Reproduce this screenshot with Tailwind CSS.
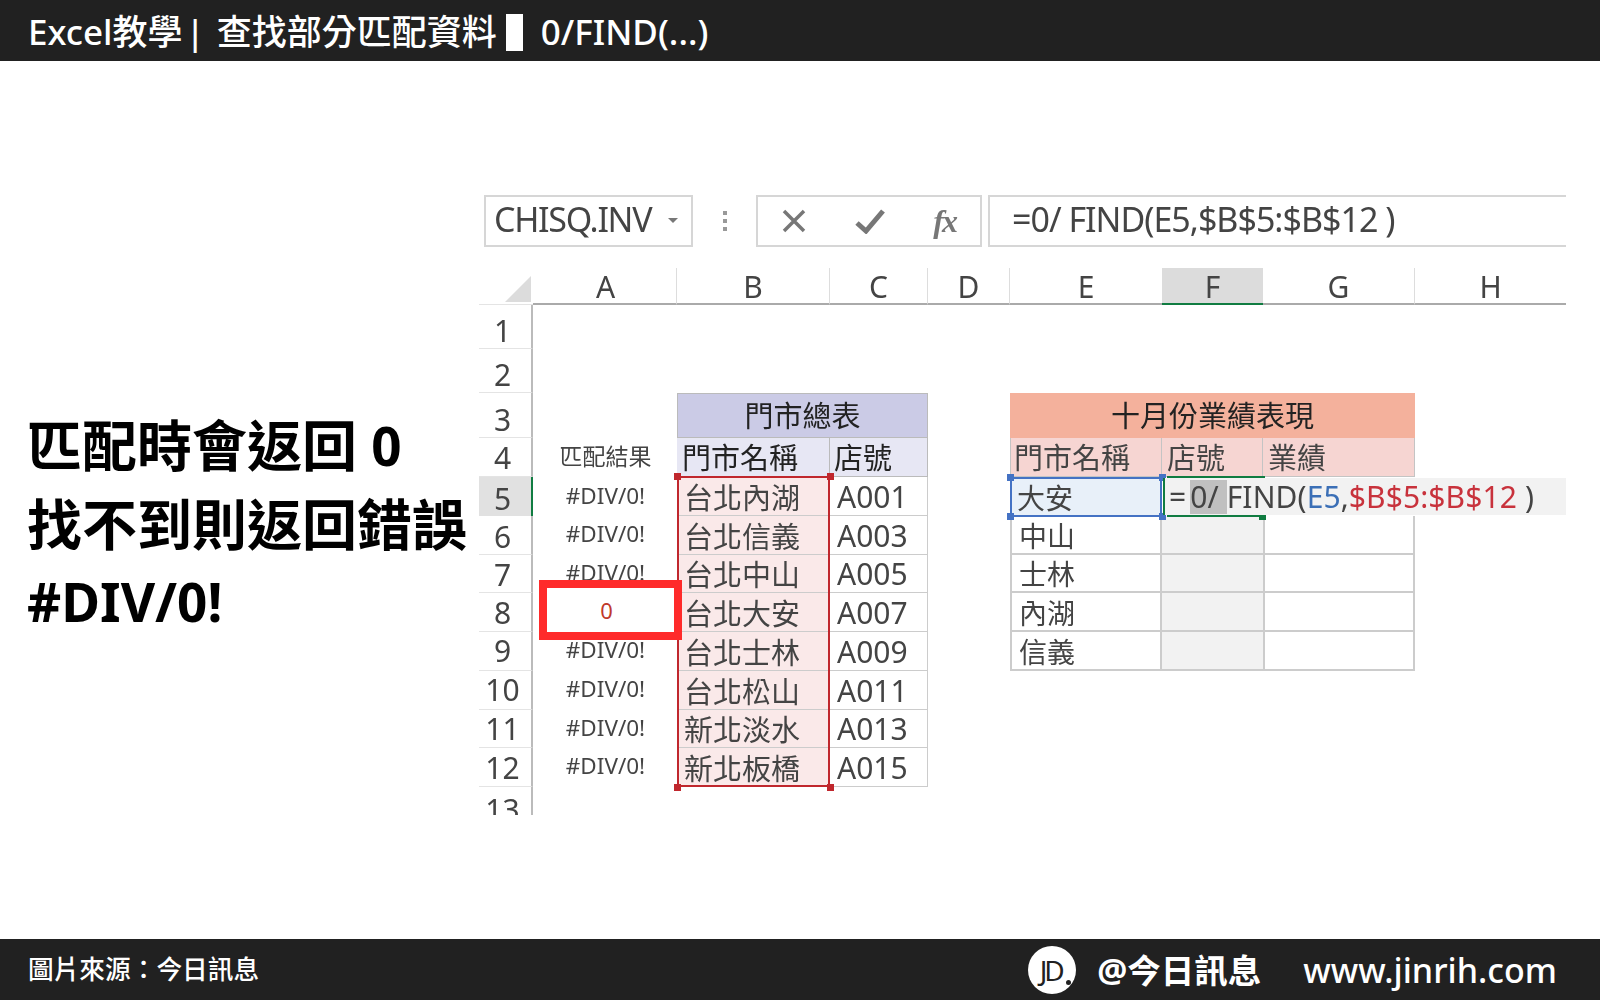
<!DOCTYPE html>
<html lang="zh-Hant">
<head>
    <meta charset="UTF-8">
    <title>Excel教學 | 查找部分匹配資料 0/FIND(...)</title>
    <script src="https://cdn.jsdelivr.net/npm/@tailwindcss/browser@4"></script>
</head>
<body class="bg-white font-['Noto_Sans','Noto_Sans_CJK_TC',sans-serif] text-[#111]">
<div class="flex flex-col w-[1600px] h-[1000px] overflow-hidden">

    <!-- 頂部標題列 -->
    <header class="h-[61px] shrink-0 bg-[#212121] flex items-center pl-[28px] pt-[3px] text-white text-[35px] font-medium">
        <span>Excel教學</span>
        <span class="ml-[3px] mr-[12px]">|</span>
        <span>查找部分匹配資料</span>
        <span class="inline-block w-[17px] h-[37px] bg-white ml-[9px] mr-[18px]"></span>
        <span>0/FIND(...)</span>
    </header>

    <main class="flex-1 flex">
        <!-- 左側說明 -->
        <div class="w-[479px] shrink-0 pl-[27px] pt-[345px] text-[55px] leading-[78px] font-bold text-black whitespace-nowrap">
            <p>匹配時會返回 <span class="text-[53px]">0</span></p>
            <p>找不到則返回錯誤</p>
            <p class="text-[53px]">#DIV/0!</p>
        </div>

        <!-- 試算表 -->
        <div class="w-[1087px] shrink-0 pt-[134px] text-[#444] blur-[0.4px]">
            <!-- 公式列 -->
            <div class="flex h-[52px] pl-[5px]">
                <div class="w-[209px] border-2 border-[#d6d6d6] flex items-center pl-[8px] pb-[3px] text-[34px] tracking-[-1.3px]">
                    <span>CHISQ.INV</span>
                    <svg class="ml-[16px] mt-[3px]" width="12" height="8" viewBox="0 0 12 8"><path d="M1 1h10L6 6z" fill="#777"/></svg>
                </div>
                <div class="w-[63px] flex flex-col items-center justify-center gap-[4px]">
                    <span class="size-[4px] bg-[#999]"></span>
                    <span class="size-[4px] bg-[#999]"></span>
                    <span class="size-[4px] bg-[#999]"></span>
                </div>
                <div class="w-[226px] border-2 border-[#d6d6d6] flex items-center justify-between pl-[23px] pr-[24px]">
                    <svg width="26" height="26" viewBox="0 0 26 26"><path d="M3 3l20 20M23 3L3 23" stroke="#777" stroke-width="3.5" fill="none"/></svg>
                    <svg width="30" height="26" viewBox="0 0 30 26"><path d="M2 15l9 8L28 3" stroke="#777" stroke-width="5" fill="none"/></svg>
                    <span class="font-['Liberation_Serif',serif] italic font-bold text-[32px] tracking-[-2px] text-[#777] leading-none">fx</span>
                </div>
                <div class="w-[578px] ml-[6px] border-y-2 border-l-2 border-[#d6d6d6] flex items-center pl-[22px] pb-[3px] text-[34px] tracking-[-1px] whitespace-pre">=0/ FIND(E5,$B$5:$B$12 )</div>
            </div>

            <!-- 工作表格線 -->
            <div class="relative mt-[21px] grid grid-cols-[54px_144px_153px_98px_82px_152px_101px_152px_151px] grid-rows-[37px_44px_44px_45px_39px_repeat(8,38.75px)_28px] text-[28px] leading-none">
                <!-- 欄標題 -->
                <div class="col-start-1 row-start-1 border-b border-[#e4e4e4] relative">
                    <svg class="absolute right-[2px] bottom-[2px]" width="26" height="26" viewBox="0 0 26 26"><path d="M26 0v26H0z" fill="#dcdcdc"/></svg>
                </div>
                <div class="col-start-2 row-start-1 border-b-2 border-r border-b-[#aaa] border-r-[#ddd] flex items-center justify-center text-[30px] pl-[2px] pt-[2px]">A</div>
                <div class="col-start-3 row-start-1 border-b-2 border-r border-b-[#aaa] border-r-[#ddd] flex items-center justify-center text-[30px] pt-[2px]">B</div>
                <div class="col-start-4 row-start-1 border-b-2 border-r border-b-[#aaa] border-r-[#ddd] flex items-center justify-center text-[30px] pt-[2px]">C</div>
                <div class="col-start-5 row-start-1 border-b-2 border-r border-b-[#aaa] border-r-[#ddd] flex items-center justify-center text-[30px] pt-[2px]">D</div>
                <div class="col-start-6 row-start-1 border-b-2 border-b-[#aaa] flex items-center justify-center text-[30px] pt-[2px]">E</div>
                <div class="col-start-7 row-start-1 border-b-2 border-b-[#107c41] bg-[#dcdcdc] flex items-center justify-center text-[30px] pt-[2px]">F</div>
                <div class="col-start-8 row-start-1 border-b-2 border-r border-b-[#aaa] border-r-[#ddd] flex items-center justify-center text-[30px] pt-[2px]">G</div>
                <div class="col-start-9 row-start-1 border-b-2 border-b-[#aaa] flex items-center justify-center text-[30px] pt-[2px]">H</div>

                <!-- 列標題 -->
                <div class="col-start-1 row-start-2 border-r-2 border-b border-r-[#bbb] border-b-[#e4e4e4] flex items-center justify-center text-[30px] pr-[5px] pt-[9px]">1</div>
                <div class="col-start-1 row-start-3 border-r-2 border-b border-r-[#bbb] border-b-[#e4e4e4] flex items-center justify-center text-[30px] pr-[5px] pt-[9px]">2</div>
                <div class="col-start-1 row-start-4 border-r-2 border-b border-r-[#bbb] border-b-[#e4e4e4] flex items-center justify-center text-[30px] pr-[5px] pt-[10px]">3</div>
                <div class="col-start-1 row-start-5 border-r-2 border-b border-r-[#bbb] border-b-[#e4e4e4] flex items-center justify-center text-[30px] pr-[5px] pt-[2px]">4</div>
                <div class="col-start-1 row-start-6 border-r-2 border-r-[#107c41] bg-[#e1e1e1] flex items-center justify-center text-[30px] pr-[5px] pt-[5px]">5</div>
                <div class="col-start-1 row-start-7 border-r-2 border-b border-r-[#bbb] border-b-[#e4e4e4] flex items-center justify-center text-[30px] pr-[5px] pt-[4px]">6</div>
                <div class="col-start-1 row-start-8 border-r-2 border-b border-r-[#bbb] border-b-[#e4e4e4] flex items-center justify-center text-[30px] pr-[5px] pt-[4px]">7</div>
                <div class="col-start-1 row-start-9 border-r-2 border-b border-r-[#bbb] border-b-[#e4e4e4] flex items-center justify-center text-[30px] pr-[5px] pt-[1px]">8</div>
                <div class="col-start-1 row-start-10 border-r-2 border-b border-r-[#bbb] border-b-[#e4e4e4] flex items-center justify-center text-[30px] pr-[5px] pt-[1px]">9</div>
                <div class="col-start-1 row-start-11 border-r-2 border-b border-r-[#bbb] border-b-[#e4e4e4] flex items-center justify-center text-[30px] pr-[5px] pt-[1px]">10</div>
                <div class="col-start-1 row-start-12 border-r-2 border-b border-r-[#bbb] border-b-[#e4e4e4] flex items-center justify-center text-[30px] pr-[5px] pt-[1px]">11</div>
                <div class="col-start-1 row-start-13 border-r-2 border-b border-r-[#bbb] border-b-[#e4e4e4] flex items-center justify-center text-[30px] pr-[5px] pt-[1px]">12</div>
                <div class="col-start-1 row-start-14 border-r-2 border-r-[#bbb] overflow-hidden flex items-start justify-center text-[30px] pr-[5px] pt-[8px]">13</div>

                <!-- A欄 匹配結果 -->
                <div class="col-start-2 row-start-5 flex items-center justify-center text-[23px] pb-[2px] pl-[1px]">匹配結果</div>
                <div class="col-start-2 row-start-6 flex items-center justify-center text-[22.5px] pl-[1px]">#DIV/0!</div>
                <div class="col-start-2 row-start-7 flex items-center justify-center text-[22.5px] pb-[1px] pl-[1px]">#DIV/0!</div>
                <div class="col-start-2 row-start-8 flex items-center justify-center text-[22.5px] pb-[1px] pl-[1px]">#DIV/0!</div>
                <div class="col-start-2 row-start-10 flex items-center justify-center text-[22.5px] pb-[2px] pl-[1px]">#DIV/0!</div>
                <div class="col-start-2 row-start-11 flex items-center justify-center text-[22.5px] pb-[2px] pl-[1px]">#DIV/0!</div>
                <div class="col-start-2 row-start-12 flex items-center justify-center text-[22.5px] pb-[2px] pl-[1px]">#DIV/0!</div>
                <div class="col-start-2 row-start-13 flex items-center justify-center text-[22.5px] pb-[2px] pl-[1px]">#DIV/0!</div>

                <!-- 門市總表 -->
                <div class="col-start-3 col-span-2 row-start-4 bg-[#cbcbe6] border border-[#bbb] flex items-center justify-center text-[#222] text-[29px]">門市總表</div>
                <div class="col-start-3 row-start-5 bg-[#e7e7f4] border-r border-b border-[#bbb] flex items-center pl-[5px] text-[#222] text-[29px]">門市名稱</div>
                <div class="col-start-4 row-start-5 bg-[#e7e7f4] border-r border-b border-[#bbb] flex items-center pl-[4px] text-[#222] text-[29px]">店號</div>

                <div class="col-start-3 row-start-6 bg-[#fae9e9] border-b border-[#ccc] flex items-center pl-[7px] pt-[3px] text-[29px]">台北內湖</div>
                <div class="col-start-3 row-start-7 bg-[#fae9e9] border-b border-[#ccc] flex items-center pl-[7px] pt-[3px] text-[29px]">台北信義</div>
                <div class="col-start-3 row-start-8 bg-[#fae9e9] border-b border-[#ccc] flex items-center pl-[7px] pt-[3px] text-[29px]">台北中山</div>
                <div class="col-start-3 row-start-9 bg-[#fae9e9] border-b border-[#ccc] flex items-center pl-[7px] pt-[3px] text-[29px]">台北大安</div>
                <div class="col-start-3 row-start-10 bg-[#fae9e9] border-b border-[#ccc] flex items-center pl-[7px] pt-[3px] text-[29px]">台北士林</div>
                <div class="col-start-3 row-start-11 bg-[#fae9e9] border-b border-[#ccc] flex items-center pl-[7px] pt-[3px] text-[29px]">台北松山</div>
                <div class="col-start-3 row-start-12 bg-[#fae9e9] border-b border-[#ccc] flex items-center pl-[7px] pt-[3px] text-[29px]">新北淡水</div>
                <div class="col-start-3 row-start-13 bg-[#fae9e9] border-b border-[#ccc] flex items-center pl-[7px] pt-[3px] text-[29px]">新北板橋</div>

                <div class="col-start-4 row-start-6 border-r border-b border-[#ccc] flex items-center pl-[7px] pt-[2px] text-[30px]">A001</div>
                <div class="col-start-4 row-start-7 border-r border-b border-[#ccc] flex items-center pl-[7px] pt-[2px] text-[30px]">A003</div>
                <div class="col-start-4 row-start-8 border-r border-b border-[#ccc] flex items-center pl-[7px] pt-[2px] text-[30px]">A005</div>
                <div class="col-start-4 row-start-9 border-r border-b border-[#ccc] flex items-center pl-[7px] pt-[2px] text-[30px]">A007</div>
                <div class="col-start-4 row-start-10 border-r border-b border-[#ccc] flex items-center pl-[7px] pt-[2px] text-[30px]">A009</div>
                <div class="col-start-4 row-start-11 border-r border-b border-[#ccc] flex items-center pl-[7px] pt-[2px] text-[30px]">A011</div>
                <div class="col-start-4 row-start-12 border-r border-b border-[#ccc] flex items-center pl-[7px] pt-[2px] text-[30px]">A013</div>
                <div class="col-start-4 row-start-13 border-r border-b border-[#ccc] flex items-center pl-[7px] pt-[2px] text-[30px]">A015</div>

                <!-- 十月份業績表現 -->
                <div class="col-start-6 col-span-3 row-start-4 bg-[#f4b19c] flex items-center justify-center text-[#222] text-[29px]">十月份業績表現</div>
                <div class="col-start-6 row-start-5 bg-[#f6d5d2] border border-t-0 border-[#c4c4c4] flex items-center pl-[3px] text-[29px]">門市名稱</div>
                <div class="col-start-7 row-start-5 bg-[#f6d5d2] border-b border-r border-[#c4c4c4] flex items-center pl-[5px] text-[29px]">店號</div>
                <div class="col-start-8 row-start-5 bg-[#f6d5d2] border-b border-r border-[#c4c4c4] flex items-center pl-[5px] text-[29px]">業績</div>

                <div class="col-start-6 row-start-6 bg-[#e8f0f9] flex items-center pl-[7px] pt-[3px]">大安</div>
                <div class="col-start-6 row-start-7 border-2 border-t-0 border-[#ccc] flex items-center pl-[7px] pt-[3px]">中山</div>
                <div class="col-start-6 row-start-8 border-2 border-t-0 border-[#ccc] flex items-center pl-[7px] pt-[3px]">士林</div>
                <div class="col-start-6 row-start-9 border-2 border-t-0 border-[#ccc] flex items-center pl-[7px] pt-[3px]">內湖</div>
                <div class="col-start-6 row-start-10 border-2 border-t-0 border-[#ccc] flex items-center pl-[7px] pt-[3px]">信義</div>
                <div class="col-start-7 row-start-7 bg-[#f2f2f2] border-b-2 border-[#ccc]"></div>
                <div class="col-start-7 row-start-8 bg-[#f2f2f2] border-b-2 border-[#ccc]"></div>
                <div class="col-start-7 row-start-9 bg-[#f2f2f2] border-b-2 border-[#ccc]"></div>
                <div class="col-start-7 row-start-10 bg-[#f2f2f2] border-b-2 border-[#ccc]"></div>
                <div class="col-start-8 row-start-7 border-x-2 border-b-2 border-[#ccc]"></div>
                <div class="col-start-8 row-start-8 border-x-2 border-b-2 border-[#ccc]"></div>
                <div class="col-start-8 row-start-9 border-x-2 border-b-2 border-[#ccc]"></div>
                <div class="col-start-8 row-start-10 border-x-2 border-b-2 border-[#ccc]"></div>

                <!-- 紅色參照框 B5:B12 -->
                <div class="absolute left-[198px] top-[208px] w-[153px] h-[311px] border-[2.5px] border-[#c0272d]"></div>
                <span class="absolute left-[195px] top-[205px] size-[7px] bg-[#c0272d]"></span>
                <span class="absolute left-[348px] top-[205px] size-[7px] bg-[#c0272d]"></span>
                <span class="absolute left-[195px] top-[516px] size-[7px] bg-[#c0272d]"></span>
                <span class="absolute left-[348px] top-[516px] size-[7px] bg-[#c0272d]"></span>

                <!-- 藍色參照框 E5 -->
                <div class="absolute left-[531px] top-[209px] w-[152px] h-[40px] border-[2.5px] border-[#4472c4]"></div>
                <span class="absolute left-[528px] top-[206px] size-[7px] bg-[#4472c4]"></span>
                <span class="absolute left-[680px] top-[206px] size-[7px] bg-[#4472c4]"></span>
                <span class="absolute left-[528px] top-[245px] size-[7px] bg-[#4472c4]"></span>
                <span class="absolute left-[680px] top-[245px] size-[7px] bg-[#4472c4]"></span>

                <!-- F5 編輯中 -->
                <div class="absolute left-[688px] top-[208px] w-[98px] h-[41px] border-y-[2.5px] border-[#107c41]"></div>
                <span class="absolute left-[780px] top-[245px] size-[7px] bg-[#107c41]"></span>
                <div class="absolute left-[684px] top-[210px] w-[403px] h-[37px] bg-[#f2f2f2] border-l-[2.5px] border-[#107c41] flex items-center pl-[4px] text-[30px] tracking-[0.1px] whitespace-pre"><span class="mr-[4px]">=</span><span class="bg-[#c0c0c0] h-[34px] flex items-center">0/ </span><span>FIND(</span><span class="text-[#3b6fb6]">E5</span><span>,</span><span class="text-[#c8323c]">$B$5:$B$12</span><span> )</span></div>

                <!-- 紅框標示 A8 -->
                <div class="absolute left-[60px] top-[312px] w-[143px] h-[60px] bg-white border-[8px] border-[#ff2a2a] flex items-center justify-center pr-[8px] text-[22px] text-[#c0392b]">0</div>
            </div>
        </div>
    </main>

    <!-- 底部資訊列 -->
    <footer class="h-[61px] shrink-0 bg-[#212121] flex items-center pl-[28px] pr-[43px] pt-[1px] text-white">
        <span class="text-[25.7px] font-medium">圖片來源：今日訊息</span>
        <div class="ml-auto flex items-center">
            <div class="relative size-[48px] rounded-full bg-white flex items-center justify-center text-[#212121] text-[28px] tracking-[-3px] leading-none pr-[3px]">JD<span class="absolute right-[5px] bottom-[9px] size-[5px] rounded-full bg-[#212121]"></span></div>
            <span class="ml-[21px] text-[33.5px] font-bold">@今日訊息</span>
            <span class="ml-[42px] text-[34px] font-medium">www.jinrih.com</span>
        </div>
    </footer>
</div>
</body>
</html>
